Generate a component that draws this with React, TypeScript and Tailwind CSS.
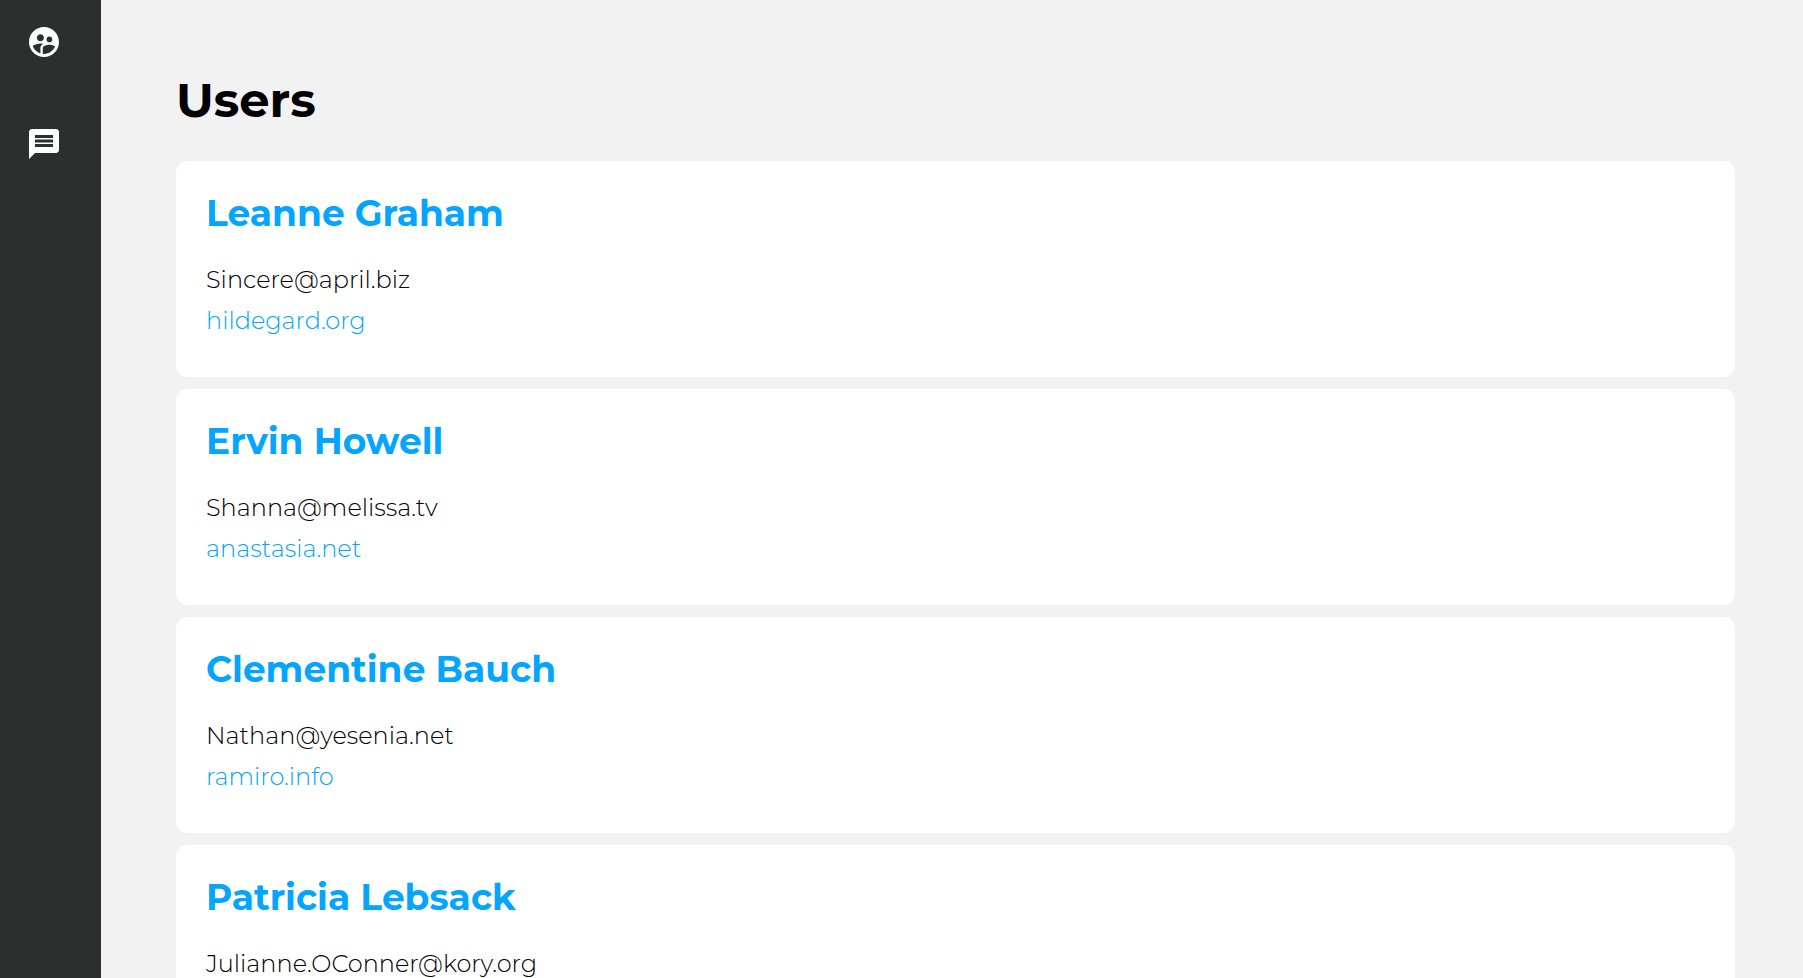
import { MdMessage, MdSupervisedUserCircle } from "react-icons/md";

type User = { name: string; email: string; website: string };

const users: User[] = [
  { name: "Leanne Graham", email: "Sincere@april.biz", website: "hildegard.org" },
  { name: "Ervin Howell", email: "Shanna@melissa.tv", website: "anastasia.net" },
  { name: "Clementine Bauch", email: "Nathan@yesenia.net", website: "ramiro.info" },
  { name: "Patricia Lebsack", email: "Julianne.OConner@kory.org", website: "kale.biz" },
];

function Sidebar() {
  return (
    <nav aria-label="Main" className="flex w-[101px] shrink-0 flex-col items-start gap-[66px] bg-[#2d2f2e] px-[26px] py-6 text-white">
      <a href="#users" aria-label="Users">
        <MdSupervisedUserCircle size={36} />
      </a>
      <a href="#messages" aria-label="Messages">
        <MdMessage size={36} />
      </a>
    </nav>
  );
}

function UserCard({ user }: { user: User }) {
  return (
    <li className="rounded-xl bg-white px-[30px] pt-[30px] pb-9">
      <h2 className="mb-6 text-4xl leading-[44px] font-bold text-[#03a5ff]">{user.name}</h2>
      <p className="text-2xl leading-[41px] font-light text-black">{user.email}</p>
      <p className="text-2xl leading-[41px] font-light text-[#03a5ff]">
        <a href={`http://${user.website}`}>{user.website}</a>
      </p>
    </li>
  );
}

export default function App() {
  return (
    <div className="flex h-screen bg-[#f2f2f2] font-[Montserrat,Inter,sans-serif]">
      <Sidebar />
      <main id="users" className="min-w-0 flex-1 overflow-y-auto pt-[70px] pr-[68px] pb-12 pl-[75px] [scrollbar-width:none]">
        <h1 className="mb-[31px] text-5xl leading-[60px] font-bold text-black">Users</h1>
        <ul className="flex flex-col gap-3">
          {users.map((user) => (
            <UserCard key={user.email} user={user} />
          ))}
        </ul>
      </main>
    </div>
  );
}
